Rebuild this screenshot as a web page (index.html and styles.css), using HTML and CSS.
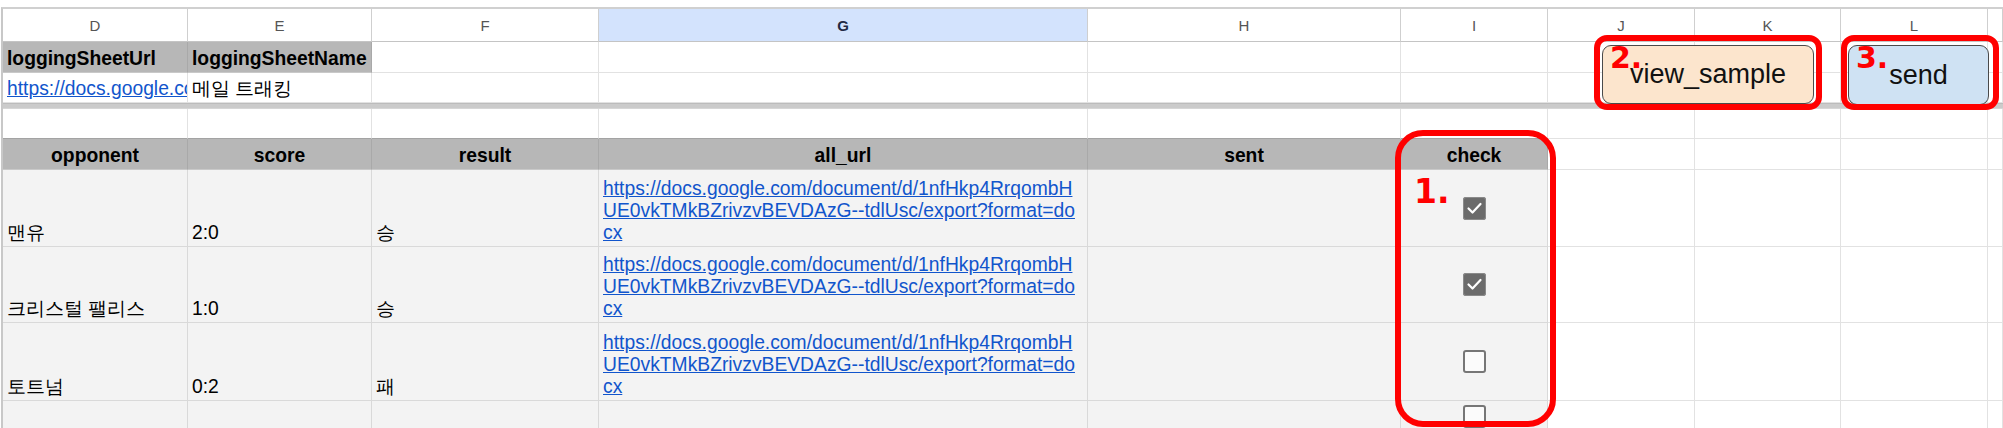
FILE: index.html
```html
<!DOCTYPE html>
<html lang="ko">
<head>
<meta charset="utf-8">
<title>Sheet</title>
<link rel="stylesheet" href="styles.css">
</head>
<body>
<div class="page">
  <div class="sheet">
    <!-- column letters -->
    <div class="ch">D</div>
    <div class="ch">E</div>
    <div class="ch">F</div>
    <div class="ch sel">G</div>
    <div class="ch">H</div>
    <div class="ch">I</div>
    <div class="ch">J</div>
    <div class="ch">K</div>
    <div class="ch">L</div>
    <div class="ch"></div>

    <!-- row 1 -->
    <div class="c hd">loggingSheetUrl</div>
    <div class="c hd">loggingSheetName</div>
    <div class="c"></div><div class="c"></div><div class="c"></div><div class="c"></div>
    <div class="c"></div><div class="c"></div><div class="c"></div><div class="c"></div>

    <!-- row 2 -->
    <div class="c"><a class="lnk" href="#">https://docs.google.com/spreadsheets</a></div>
    <div class="c">메일 트래킹</div>
    <div class="c"></div><div class="c"></div><div class="c"></div><div class="c"></div>
    <div class="c"></div><div class="c"></div><div class="c"></div><div class="c"></div>

    <div class="freeze"></div>

    <!-- row 3 -->
    <div class="c bb"></div><div class="c bb"></div><div class="c bb"></div><div class="c bb"></div>
    <div class="c bb"></div><div class="c bb"></div>
    <div class="c"></div><div class="c"></div><div class="c"></div><div class="c"></div>

    <!-- table header -->
    <div class="c hd hc">opponent</div>
    <div class="c hd hc">score</div>
    <div class="c hd hc">result</div>
    <div class="c hd hc">all_url</div>
    <div class="c hd hc">sent</div>
    <div class="c hd hc">check</div>
    <div class="c"></div><div class="c"></div><div class="c"></div><div class="c"></div>

    <!-- data row 1 -->
    <div class="c g">맨유</div>
    <div class="c g">2:0</div>
    <div class="c g">승</div>
    <div class="c g"><a class="lnk" href="#">https://docs.google.com/document/d/1nfHkp4RrqombH<br>UE0vkTMkBZrivzvBEVDAzG--tdlUsc/export?format=do<br>cx</a></div>
    <div class="c g"></div>
    <div class="c g cb"><span class="box on"><svg viewBox="0 0 23 23" width="23" height="23"><polyline points="5.5,11.5 9.5,15.5 17.5,7" fill="none" stroke="#fff" stroke-width="2.2" stroke-linecap="round" stroke-linejoin="round"/></svg></span></div>
    <div class="c"></div><div class="c"></div><div class="c"></div><div class="c"></div>

    <!-- data row 2 -->
    <div class="c g">크리스털 팰리스</div>
    <div class="c g">1:0</div>
    <div class="c g">승</div>
    <div class="c g"><a class="lnk" href="#">https://docs.google.com/document/d/1nfHkp4RrqombH<br>UE0vkTMkBZrivzvBEVDAzG--tdlUsc/export?format=do<br>cx</a></div>
    <div class="c g"></div>
    <div class="c g cb"><span class="box on"><svg viewBox="0 0 23 23" width="23" height="23"><polyline points="5.5,11.5 9.5,15.5 17.5,7" fill="none" stroke="#fff" stroke-width="2.2" stroke-linecap="round" stroke-linejoin="round"/></svg></span></div>
    <div class="c"></div><div class="c"></div><div class="c"></div><div class="c"></div>

    <!-- data row 3 -->
    <div class="c g">토트넘</div>
    <div class="c g">0:2</div>
    <div class="c g">패</div>
    <div class="c g"><a class="lnk" href="#">https://docs.google.com/document/d/1nfHkp4RrqombH<br>UE0vkTMkBZrivzvBEVDAzG--tdlUsc/export?format=do<br>cx</a></div>
    <div class="c g"></div>
    <div class="c g cb"><span class="box"></span></div>
    <div class="c"></div><div class="c"></div><div class="c"></div><div class="c"></div>

    <!-- data row 4 -->
    <div class="c g"></div><div class="c g"></div><div class="c g"></div><div class="c g"></div>
    <div class="c g"></div>
    <div class="c g cb"><span class="box"></span></div>
    <div class="c"></div><div class="c"></div><div class="c"></div><div class="c"></div>
  </div>

  <!-- floating drawings -->
  <div class="btn btn-view">view_sample</div>
  <div class="btn btn-send">send</div>

  <!-- annotations -->
  <div class="mark mark-check"></div>
  <div class="mark mark-view"></div>
  <div class="mark mark-send"></div>
  <span class="num num1">1.</span>
  <span class="num num2">2.</span>
  <span class="num num3">3.</span>
</div>
</body>
</html>
```

FILE: styles.css
```css
html, body {
  margin: 0;
  padding: 0;
  background: #ffffff;
}

body {
  width: 2003px;
  height: 428px;
  overflow: hidden;
  font-family: "Liberation Sans", Arial, sans-serif;
}

.page {
  position: relative;
  width: 2003px;
  height: 428px;
  padding-top: 7px;
  box-sizing: border-box;
  overflow: hidden;
}

.sheet {
  display: grid;
  grid-template-columns: 185px 184px 227px 489px 313px 147px 147px 146px 147px 1fr;
  grid-template-rows: 33px 31px 30px 6px 30px 31px 77px 76px 78px 31px 31px;
  margin-left: 1px;
  border-left: 2px solid #c8c8c8;
  border-top: 2px solid #d0d0d0;
}

.ch {
  box-sizing: border-box;
  border-right: 1px solid #cfcfcf;
  border-bottom: 1px solid #c4c4c4;
  display: flex;
  align-items: center;
  justify-content: center;
  font-size: 15px;
  color: #555555;
  background: #ffffff;
}

.ch.sel {
  background: #d3e3fd;
  color: #1f2a44;
  font-weight: bold;
}

.c {
  box-sizing: border-box;
  border-right: 1px solid #e2e2e2;
  border-bottom: 1px solid #e2e2e2;
  display: flex;
  align-items: flex-end;
  padding: 0 4px 2px 4px;
  font-size: 19.3px;
  line-height: 22px;
  color: #000000;
  white-space: nowrap;
  overflow: hidden;
}

.c.bb {
  border-bottom-color: #a3a3a3;
}

.hd {
  background: #b7b7b7;
  font-weight: bold;
  border-right-color: #a9a9a9;
  border-bottom-color: #c9c9c9;
}

.hc {
  justify-content: center;
}

.g {
  background: #f3f3f3;
  border-right-color: #d9d9d9;
  border-bottom-color: #d9d9d9;
}

.cb {
  align-items: center;
  justify-content: center;
  padding: 0;
}

.lnk {
  color: #1155cc;
  text-decoration: underline;
}

.freeze {
  grid-column: 1 / -1;
  background: #cbcbcb;
  border-top: 1px solid #bcbcbc;
  border-bottom: 1px solid #d6d6d6;
  box-sizing: border-box;
}

.box {
  display: block;
  width: 23px;
  height: 23px;
  box-sizing: border-box;
  border-radius: 3px;
  border: 2px solid #767676;
  background: #fbfbfb;
}

.box.on {
  border: none;
  background: #6b6b6b;
  box-shadow: 0 0 0 1px #8a8a8a inset;
}

.box svg {
  display: block;
}

.btn {
  position: absolute;
  box-sizing: border-box;
  border: 1.5px solid #4a4a4a;
  border-radius: 9px;
  display: flex;
  align-items: center;
  justify-content: center;
  font-size: 27px;
  color: #111111;
}

.btn-view {
  left: 1602px;
  top: 45px;
  width: 212px;
  height: 59px;
  background: #fce5cd;
}

.btn-send {
  left: 1848px;
  top: 45px;
  width: 141px;
  height: 60px;
  background: #cfe2f3;
}

.mark {
  position: absolute;
  box-sizing: border-box;
  border: 6px solid #ff0000;
}

.mark-check {
  left: 1395px;
  top: 130px;
  width: 161px;
  height: 297px;
  border-radius: 28px;
}

.mark-view {
  left: 1594px;
  top: 35px;
  width: 228px;
  height: 75px;
  border-radius: 13px;
}

.mark-send {
  left: 1841px;
  top: 35px;
  width: 158px;
  height: 75px;
  border-radius: 13px;
}

.num {
  position: absolute;
  font-family: "DejaVu Sans", sans-serif;
  font-weight: bold;
  color: #ff0000;
  line-height: 1;
}

.num1 {
  left: 1414px;
  top: 175px;
  font-size: 33px;
}

.num2 {
  left: 1610px;
  top: 43px;
  font-size: 30px;
}

.num3 {
  left: 1856px;
  top: 43px;
  font-size: 30px;
}
```
